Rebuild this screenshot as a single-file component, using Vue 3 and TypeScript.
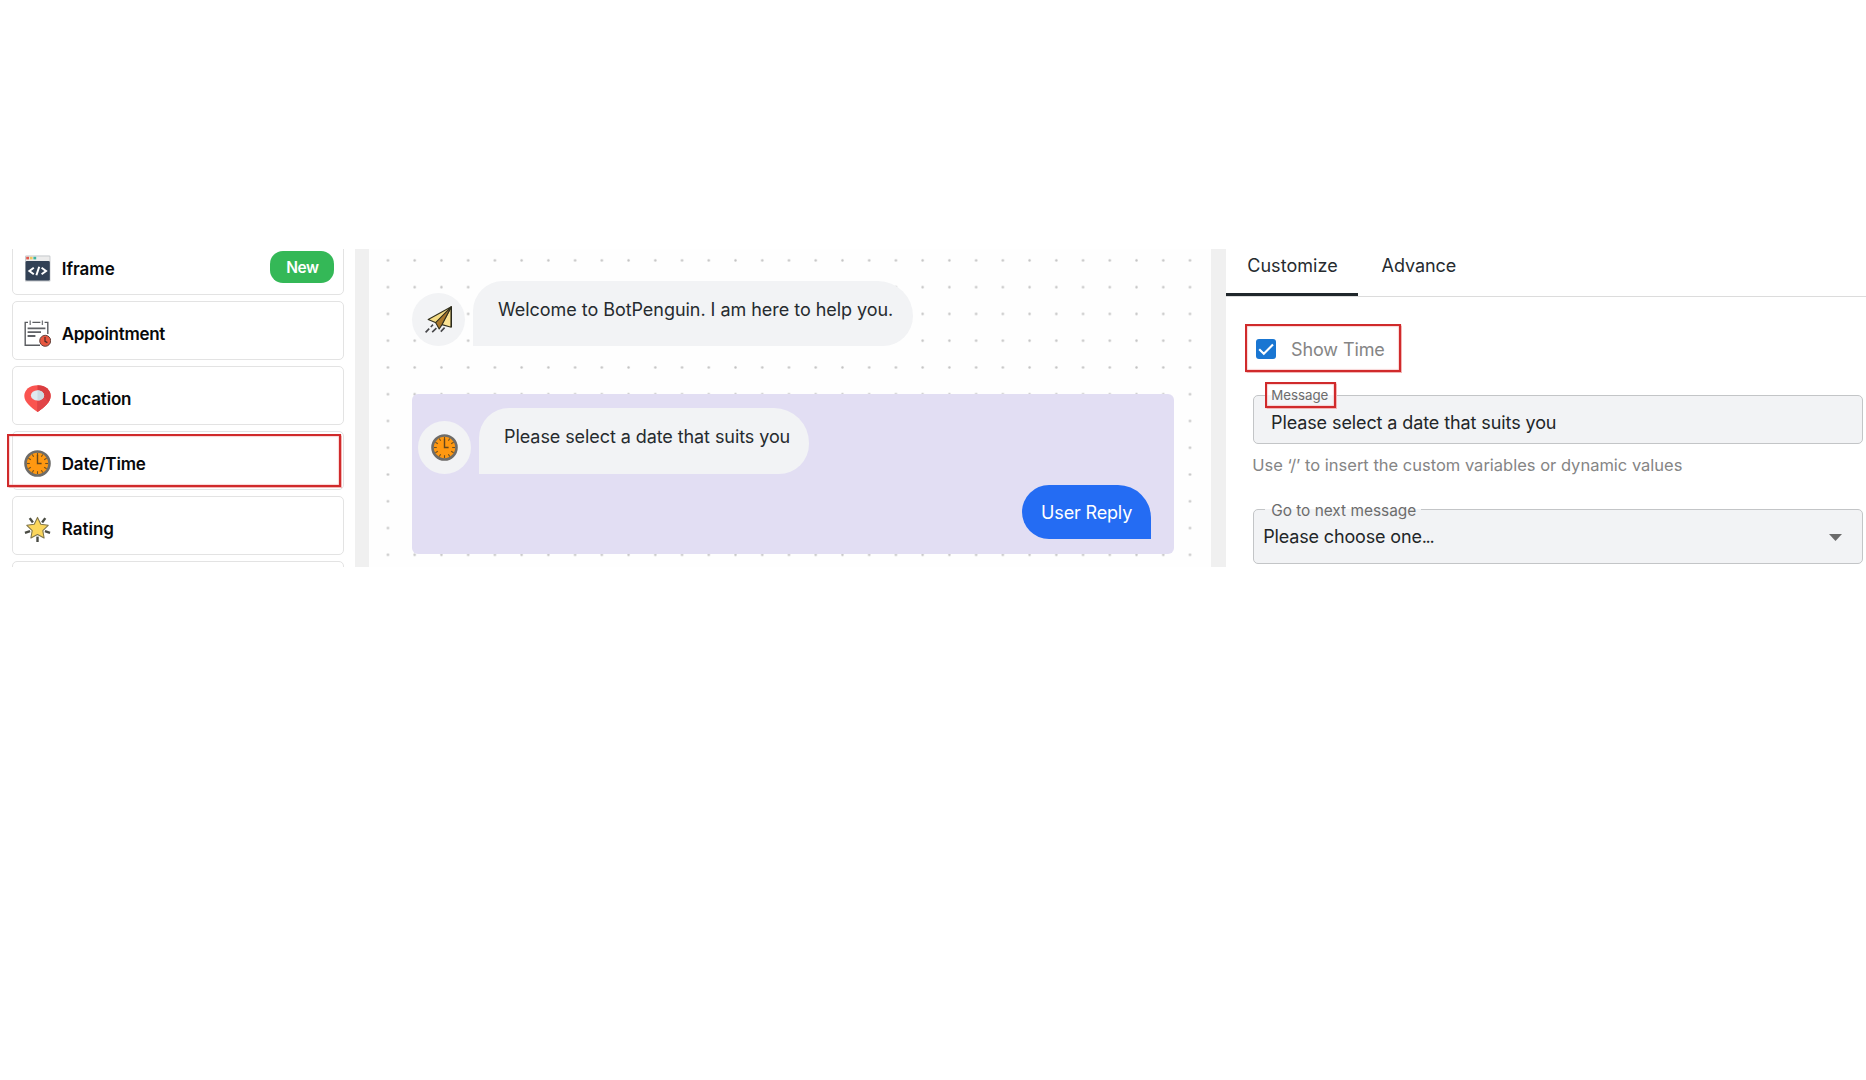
<script setup lang="ts">
interface Block {
  name: string
  icon: 'iframe' | 'appointment' | 'location' | 'clock' | 'rating' | 'none'
  spacing: number
  badge?: string
  marked?: boolean
}

const blocks: Block[] = [
  { name: 'Iframe', icon: 'iframe', spacing: 0, badge: 'New' },
  { name: 'Appointment', icon: 'appointment', spacing: -0.3 },
  { name: 'Location', icon: 'location', spacing: -0.17 },
  { name: 'Date/Time', icon: 'clock', spacing: -0.15, marked: true },
  { name: 'Rating', icon: 'rating', spacing: 0 },
  { name: '', icon: 'none', spacing: 0 },
]

const ticks = [0, 30, 60, 90, 120, 150, 180, 210, 240, 270, 300, 330]
const rays = [0, 72, 144, 216, 288]
</script>

<template>
  <main class="builder">
    <aside class="sidebar">
      <div v-for="(b, i) in blocks" :key="i" class="block">
        <svg v-if="b.icon === 'iframe'" class="icon" viewBox="0 0 27 27">
          <rect x="1" y="0.6" width="25.4" height="26" rx="1.2" fill="#c0c4c8" />
          <rect x="1.8" y="1.4" width="23.8" height="4.6" fill="#ececec" />
          <rect x="2.2" y="1.8" width="2.8" height="2.6" fill="#e2574c" />
          <rect x="5.8" y="1.8" width="2.8" height="2.6" fill="#efc75e" />
          <rect x="9.4" y="1.8" width="2.8" height="2.6" fill="#3db39e" />
          <rect x="1.6" y="6" width="24.2" height="19.6" rx="1.4" fill="#324155" />
          <path d="M9.8 12.8L5.4 16L9.8 19.2M17.6 12.8L22 16L17.6 19.2M15.2 11.8L12.4 20.2" fill="none" stroke="#fff" stroke-width="2" />
        </svg>
        <svg v-else-if="b.icon === 'appointment'" class="icon" viewBox="0 0 27 27">
          <path d="M4 2.4H1.2V25.2H16M8.4 2.4H16.4M20.6 2.4H23.8V14" fill="none" stroke="#5a5c60" stroke-width="1.4" />
          <path d="M6.2 .4V5M18.4 .4V5" stroke="#77797d" stroke-width="1.3" />
          <path d="M3.6 8.4H21.4M3.6 12.2H17M3.6 16H11.4" stroke="#5f6165" stroke-width="1.8" />
          <circle cx="21.2" cy="20.8" r="5.5" fill="#e8573f" stroke="#64443f" stroke-width="1" />
          <path d="M21 17V21.4L23.4 22.6" fill="none" stroke="#4b2b28" stroke-width="1.2" />
        </svg>
        <svg v-else-if="b.icon === 'location'" class="icon" viewBox="0 0 27 27">
          <path d="M13.5 .2C5.6 .2 .3 4.8 .3 11C.3 17 7 22.4 13.5 27C20 22.4 26.7 17 26.7 11C26.7 4.8 21.4 .2 13.5 .2Z" fill="#fa5450" />
          <path d="M13.5 .2C21.4 .2 26.7 4.8 26.7 11C26.7 17 20 22.4 13.5 27Z" fill="#d93d40" />
          <path d="M13.5 15.8L20.8 12L24.5 17.2C21.5 21 17.5 24.2 13.5 27Z" fill="#e14548" />
          <ellipse cx="13.5" cy="10.4" rx="6.6" ry="5.2" fill="#dfe9ef" />
          <path d="M13.5 5.2A6.6 5.2 0 0 1 13.5 15.6Z" fill="#cddae2" />
        </svg>
        <svg v-else-if="b.icon === 'clock'" class="icon" viewBox="0 0 27 27">
          <circle cx="13.5" cy="13.5" r="12" fill="#ff9811" stroke="#6e6c69" stroke-width="2.6" />
          <path v-for="t in ticks" :key="t" d="M13.5 3V5.8" stroke="#70501f" stroke-width="1.1" :transform="`rotate(${t} 13.5 13.5)`" />
          <path d="M13.5 4.8V13.5H17.6" fill="none" stroke="#63461d" stroke-width="1.4" />
        </svg>
        <svg v-else-if="b.icon === 'rating'" class="icon" viewBox="0 0 27 27">
          <path v-for="r in rays" :key="r" d="M13.5 21.6V27" stroke="#4a4c44" stroke-width="2.4" :transform="`rotate(${r} 13.5 13.8)`" />
          <path d="M13.5 2.4L16.8 9.3L24.2 10.3L18.8 15.6L20.1 23L13.5 19.5L6.9 23L8.2 15.6L2.8 10.3L10.2 9.3Z" fill="#fbd65c" stroke="#80764b" stroke-width="1.1" stroke-linejoin="round" />
        </svg>
        <span class="block-name" :style="{ letterSpacing: b.spacing + 'px' }">{{ b.name }}</span>
        <span v-if="b.badge" class="badge">{{ b.badge }}</span>
        <i v-if="b.marked" class="mark block-mark"></i>
      </div>
    </aside>

    <div class="gutter"></div>

    <section class="canvas">
      <div class="message">
        <div class="avatar">
          <svg class="icon" viewBox="0 0 27 27">
            <path d="M26.3 .8L3.2 13.6L11 16.8Z" fill="#f5dc85" stroke="#33311f" stroke-width="1.1" stroke-linejoin="round" />
            <path d="M26.3 .8L17 18.6L26.2 21.3Z" fill="#fbe394" stroke="#33311f" stroke-width="1.1" stroke-linejoin="round" />
            <path d="M26.3 .8L10.6 16.6L14.2 23L17 18.6Z" fill="#a9772b" stroke="#33311f" stroke-width="1.1" stroke-linejoin="round" />
            <path d="M8 18.6L5.8 21M4.2 22.6L.6 26.4M11.4 22.2L7.2 26.2M19.6 21.6L15.8 25.6" stroke="#47474a" stroke-width="1.6" />
            <path d="M26.3 1V21" stroke="#29281c" stroke-width="1.3" />
          </svg>
        </div>
        <div class="bubble welcome">Welcome to BotPenguin. I am here to help you.</div>
      </div>

      <div class="selected">
        <div class="message">
          <div class="avatar">
            <svg class="icon" viewBox="0 0 27 27">
              <circle cx="13.5" cy="13.5" r="12" fill="#ff9811" stroke="#6e6c69" stroke-width="2.6" />
              <path v-for="t in ticks" :key="t" d="M13.5 3V5.8" stroke="#70501f" stroke-width="1.1" :transform="`rotate(${t} 13.5 13.5)`" />
              <path d="M13.5 4.8V13.5H17.6" fill="none" stroke="#63461d" stroke-width="1.4" />
            </svg>
          </div>
          <div class="bubble question">Please select a date that suits you</div>
        </div>
        <div class="reply">User Reply</div>
      </div>
    </section>

    <div class="gutter"></div>

    <section class="panel">
      <nav class="tabs">
        <span class="tab active">Customize</span>
        <span class="tab">Advance</span>
      </nav>

      <label class="mark show-time">
        <span class="checkbox">
          <svg viewBox="0 0 20 20"><path d="M3.2 10.2L7.8 14.8L17 5.4" fill="none" stroke="#fff" stroke-width="2.1" /></svg>
        </span>
        <span class="show-label">Show Time</span>
      </label>

      <div class="field message-field">
        <span class="mark field-label">Message</span>
        <span class="value">Please select a date that suits you</span>
      </div>
      <p class="hint">Use ‘/’ to insert the custom variables or dynamic values</p>

      <div class="field next-field">
        <span class="notch">Go to next message</span>
        <span class="choice">Please choose one<span class="dots">...</span></span>
        <svg class="arrow" viewBox="0 0 13 7"><path d="M0 0H13L6.5 7Z" fill="#6b6b6b" /></svg>
      </div>
    </section>
  </main>
</template>

<style>
body {
  margin: 0;
  background: #fff;
}
</style>

<style scoped>
.builder {
  display: flex;
  width: 1866px;
  height: 318px;
  margin-top: 249px;
  overflow: hidden;
  font-family: Inter, "Liberation Sans", sans-serif;
  font-size: 18px;
  line-height: 24px;
  color: #262b2f;
  white-space: nowrap;
}
.builder * {
  box-sizing: border-box;
}
.icon {
  display: block;
  flex: none;
  width: 27px;
  height: 27px;
}
.mark {
  border: 2.5px solid #d02a2b;
  box-shadow: 0 0 1px 0.5px #f3b5b5, inset 0 0 1px 0.5px #f3b5b5;
}

.sidebar {
  display: flex;
  flex: none;
  flex-direction: column;
  gap: 6px;
  width: 354.6px;
  padding-left: 12px;
  margin-top: -13px;
}
.block {
  position: relative;
  display: flex;
  flex: none;
  align-items: center;
  width: 332px;
  height: 59px;
  padding: 6px 9px 0 11.4px;
  border: 1px solid #e3e3e3;
  border-radius: 5px;
}
.block-name {
  margin-left: 10.3px;
  font-size: 17px;
  font-weight: 600;
  color: #08090a;
}
.badge {
  width: 64px;
  height: 32px;
  margin-top: -3px;
  margin-right: -0.4px;
  margin-left: auto;
  border-radius: 13px;
  background: #34b857;
  color: #fff;
  font-size: 15.5px;
  font-weight: 600;
  letter-spacing: -0.4px;
  line-height: 34px;
  text-align: center;
}
.block-mark {
  position: absolute;
  top: 2px;
  left: -6px;
  width: 334px;
  height: 53px;
}

.gutter {
  flex: none;
  width: 14.8px;
  background: #f0f0f0;
}

.canvas {
  flex: none;
  width: 842px;
  padding: 32px 0 0 42.6px;
  background-color: #fefefe;
  background-image: radial-gradient(circle, #c2c2c2 0.7px, rgba(200, 200, 200, 0) 1.7px);
  background-position: 5.6px -2px;
  background-size: 26.74px 26.77px;
}
.message {
  display: flex;
  align-items: flex-end;
  gap: 7.3px;
}
.avatar {
  display: flex;
  flex: none;
  align-items: center;
  justify-content: center;
  width: 53.4px;
  height: 53.4px;
  border-radius: 50%;
  background: #f2f3f5;
}
.bubble {
  border-radius: 30px 35px 30px 0;
  background: #f2f3f5;
}
.welcome {
  width: 440.5px;
  height: 65.3px;
  padding: 17px 0 0 25.3px;
  letter-spacing: -0.04px;
}
.selected {
  width: 762px;
  height: 160px;
  padding: 14px 23.3px 0 6px;
  margin-top: 47.7px;
  border-radius: 6px;
  background: #e2def3;
}
.question {
  width: 330px;
  height: 66px;
  padding: 17.2px 0 0 25.4px;
  letter-spacing: -0.08px;
}
.reply {
  width: 129px;
  height: 54.6px;
  padding-left: 19.4px;
  margin-top: 10.7px;
  margin-left: auto;
  border-radius: 27px 33px 0 27px;
  background: #246cf3;
  color: #fff;
  letter-spacing: -0.16px;
  line-height: 56px;
}

.panel {
  flex: 1;
  min-width: 0;
}
.tabs {
  display: flex;
  height: 47.6px;
  border-bottom: 1px solid #dcdcdc;
}
.tab {
  height: 46.6px;
  padding: 5px 0 0 23.2px;
  letter-spacing: -0.07px;
}
.tab.active {
  width: 132.2px;
  padding-left: 21px;
  border-bottom: 3.3px solid #20272b;
  letter-spacing: 0.06px;
}
.show-time {
  display: flex;
  align-items: center;
  width: 156px;
  height: 48px;
  margin: 27.4px 0 0 18.7px;
  padding-left: 9.2px;
}
.checkbox {
  width: 20px;
  height: 20px;
  margin-top: 2.6px;
  border-radius: 3px;
  background: #1976d2;
}
.checkbox svg {
  display: block;
}
.show-label {
  margin: 4.2px 0 0 14.9px;
  color: #858585;
  letter-spacing: -0.1px;
}
.field {
  position: relative;
  width: 610.3px;
  margin-left: 26.5px;
  border: 1px solid #c3c5c7;
  border-radius: 5px;
  background: #f2f3f5;
  color: #222628;
}
.message-field {
  display: flex;
  height: 49px;
  padding: 15px 0 0 17.3px;
  margin-top: 23px;
}
.value {
  letter-spacing: -0.1px;
}
.field-label {
  position: absolute;
  top: -14px;
  left: 11.3px;
  width: 71px;
  height: 26px;
  padding-left: 4.2px;
  background: linear-gradient(#fff 50%, #f4f5f7 50%);
  color: #6c6c6c;
  font-size: 13.3px;
  line-height: 22px;
}
.hint {
  margin: 9.5px 0 0 26px;
  color: #858585;
  font-size: 16.5px;
}
.next-field {
  display: flex;
  align-items: center;
  justify-content: space-between;
  height: 55px;
  padding: 2px 20px 0 9.5px;
  margin-top: 31.5px;
}
.notch {
  position: absolute;
  top: -9px;
  left: 11.3px;
  width: 156px;
  height: 18px;
  padding-left: 6.2px;
  background: linear-gradient(#fff 8px, #f2f3f5 8px);
  color: #6c6c6c;
  font-size: 15.4px;
  line-height: 19px;
}
.choice {
  letter-spacing: -0.15px;
}
.dots {
  letter-spacing: -1.4px;
}
.arrow {
  width: 13px;
  height: 7px;
  margin-top: 1px;
}
</style>
